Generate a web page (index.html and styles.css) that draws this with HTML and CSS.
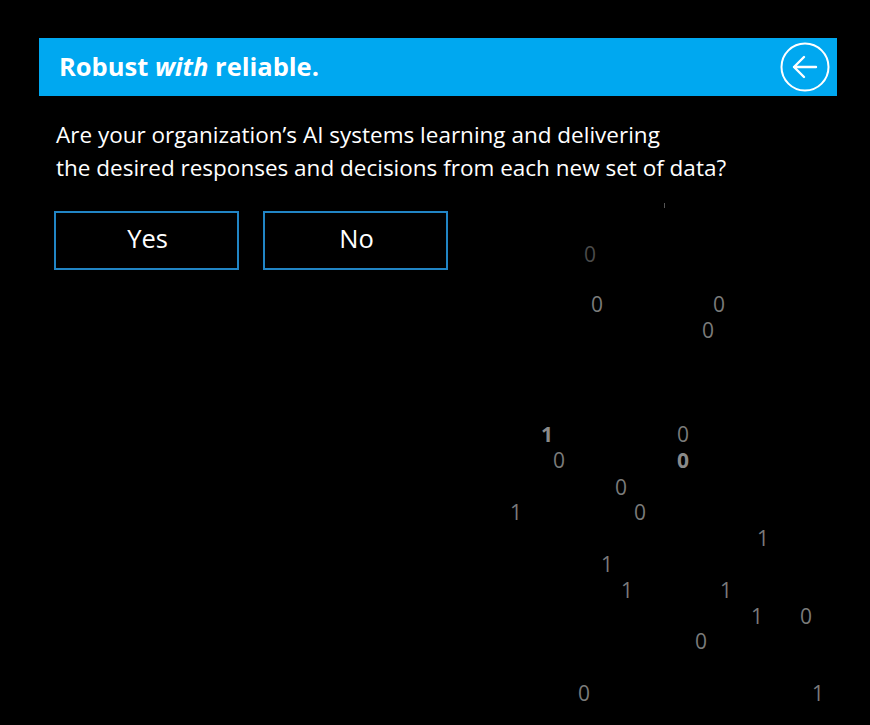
FILE: index.html
```html
<!DOCTYPE html>
<html>
<head>
<meta charset="utf-8">
<link rel="stylesheet" href="styles.css">
</head>
<body>
<div class="page">
  <div class="digits" aria-hidden="true">
    <span class="d dim" style="left:582px;top:241px">0</span>
    <span class="d" style="left:589px;top:291px">0</span>
    <span class="d" style="left:711px;top:291px">0</span>
    <span class="d" style="left:700px;top:317px">0</span>
    <span class="d b" style="left:539px;top:421px">1</span>
    <span class="d" style="left:675px;top:421px">0</span>
    <span class="d" style="left:551px;top:447px">0</span>
    <span class="d b" style="left:675px;top:447px">0</span>
    <span class="d" style="left:613px;top:474px">0</span>
    <span class="d" style="left:508px;top:499px">1</span>
    <span class="d" style="left:632px;top:499px">0</span>
    <span class="d" style="left:755px;top:525px">1</span>
    <span class="d" style="left:599px;top:551px">1</span>
    <span class="d" style="left:619px;top:577px">1</span>
    <span class="d" style="left:718px;top:577px">1</span>
    <span class="d" style="left:749px;top:603px">1</span>
    <span class="d" style="left:798px;top:603px">0</span>
    <span class="d" style="left:693px;top:628px">0</span>
    <span class="d" style="left:576px;top:680px">0</span>
    <span class="d" style="left:810px;top:680px">1</span>
    <span class="tick" style="left:662px;top:203px"></span>
  </div>
  <header class="bar">
    <h1 class="title">Robust <em>with</em> reliable.</h1>
    <button class="back" aria-label="Back">
      <svg width="50" height="50" viewBox="0 0 50 50">
        <circle cx="25" cy="25" r="23.5" fill="none" stroke="#fff" stroke-width="2"/>
        <path d="M14 25 H36 M24 15 L14 25 L24 35" fill="none" stroke="#fff" stroke-width="2.4" stroke-linecap="round" stroke-linejoin="round"/>
      </svg>
    </button>
  </header>
  <p class="question">Are your organization’s AI systems learning and delivering<br>the desired responses and decisions from each new set of data?</p>
  <div class="choices">
    <button class="choice">Yes</button>
    <button class="choice">No</button>
  </div>
</div>
</body>
</html>
```
FILE: styles.css
```css
html, body {
  margin: 0;
  padding: 0;
  background: #000;
}
body {
  width: 870px;
  height: 725px;
  overflow: hidden;
  font-family: "Open Sans", "Noto Sans", sans-serif;
  color: #fff;
}
.page {
  position: relative;
  width: 870px;
  height: 725px;
  padding: 38px 33px 0 39px;
  box-sizing: border-box;
}
.bar {
  position: relative;
  z-index: 1;
  height: 58px;
  background: #00a8f0;
  display: flex;
  align-items: center;
  justify-content: space-between;
  padding: 0 7px 0 20px;
}
.title {
  margin: 0;
  font-size: 25.5px;
  font-weight: 700;
  line-height: 1;
}
.title em {
  font-style: italic;
}
.back {
  background: none;
  border: 0;
  padding: 0;
  width: 50px;
  height: 50px;
  display: flex;
  cursor: pointer;
}
.question {
  position: relative;
  z-index: 1;
  margin: 22px 0 0 17px;
  font-size: 22.5px;
  line-height: 33px;
}
.choices {
  position: relative;
  z-index: 1;
  display: flex;
  gap: 24px;
  margin: 27px 0 0 15px;
}
.choice {
  width: 185px;
  height: 59px;
  box-sizing: border-box;
  background: #000;
  border: 2px solid #2185c5;
  color: #fff;
  font-family: "Open Sans", "Noto Sans", sans-serif;
  font-size: 25.5px;
  line-height: 1;
  padding: 0 0 4px 2px;
}
.digits {
  position: absolute;
  top: 0;
  left: 2px;
  right: 0;
  bottom: 0;
}
.d {
  position: absolute;
  font-size: 21px;
  line-height: 26px;
  color: #7a7a7a;
}
.d.dim {
  color: #4a4a4a;
}
.d.b {
  font-weight: 700;
  color: #8a8a8a;
}
.tick {
  position: absolute;
  width: 1px;
  height: 5px;
  background: #555;
}
```
